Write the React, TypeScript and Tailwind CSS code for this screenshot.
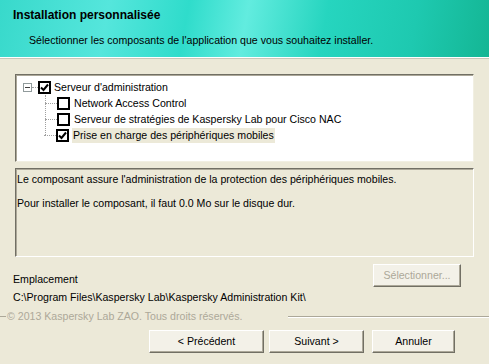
import React from "react";

const font = { fontFamily: '"Liberation Sans", Arial, sans-serif' };

function CheckBox({ checked }: { checked: boolean }) {
  return (
    <div className="w-[13px] h-[13px] border-2 border-black bg-white flex items-center justify-center shrink-0">
      {checked && (
        <svg width="9" height="9" viewBox="0 0 9 9">
          <path d="M1 4.5 L3.5 7 L8 1.5" stroke="black" strokeWidth="2" fill="none" />
        </svg>
      )}
    </div>
  );
}

function Child({ label, checked, selected }: { label: string; checked: boolean; selected?: boolean }) {
  return (
    <div className="flex items-center h-[16px]">
      <div className="w-[12px] h-px border-t border-dotted border-[#a0a0a0] ml-[7px]" />
      <CheckBox checked={checked} />
      <span className={"ml-[3px] px-[1px] leading-[15px] " + (selected ? "bg-[#ece9d8]" : "")}>{label}</span>
    </div>
  );
}

function Btn({ children, disabled, className }: { children: React.ReactNode; disabled?: boolean; className?: string }) {
  return (
    <div
      className={
        "h-[23px] flex items-center justify-center bg-[#f3f1e8] border border-t-white border-l-white border-r-[#716f64] border-b-[#716f64] shadow-[inset_-1px_-1px_0_#aca899] " +
        (disabled ? "text-[#aca899] " : "text-black ") +
        (className ?? "")
      }
    >
      {children}
    </div>
  );
}

export default function App() {
  return (
    <div className="w-[489px] h-[364px] bg-[#ece9d8] text-[10.6px] text-black overflow-hidden flex flex-col" style={font}>
      <div className="h-[57px] bg-[linear-gradient(100deg,#38d9cb_0%,#55e6dc_22%,#2fdccb_38%,#62ecdf_50%,#26d5bf_66%,#1ec9b0_84%,#14b694_100%)] pt-[8px] pl-[13px]">
        <div className="font-bold text-[12px] leading-[14px]">Installation personnalisée</div>
        <div className="pl-[16px] mt-[12px] leading-[13px]">Sélectionner les composants de l'application que vous souhaitez installer.</div>
      </div>
      <div className="h-px bg-white" />
      <div className="h-px bg-[#c9c6b8]" />

      {/* component tree */}
      <div className="mt-[15px] ml-[15px] w-[459px] h-[88px] bg-white border border-t-[#716f64] border-l-[#716f64] border-r-[#f1efe2] border-b-[#f1efe2] shadow-[inset_1px_1px_0_#aca899] pt-[4px] pl-[7px]">
        <div className="flex items-center h-[16px]">
          <div className="w-[9px] h-[9px] border border-[#919b9c] bg-white flex items-center justify-center">
            <div className="w-[5px] h-px bg-[#404040]" />
          </div>
          <div className="w-[6px] border-t border-dotted border-[#a0a0a0]" />
          <CheckBox checked />
          <span className="ml-[3px] leading-[15px]">Serveur d'administration</span>
        </div>
        <div className="ml-[22px] border-l border-dotted border-[#a0a0a0] h-[40px]">
          <div className="-ml-[8px]">
            <Child label="Network Access Control" checked={false} />
            <Child label="Serveur de stratégies de Kaspersky Lab pour Cisco NAC" checked={false} />
          </div>
        </div>
        <div className="ml-[14px] -mt-[8px]">
          <Child label="Prise en charge des périphériques mobiles" checked selected />
        </div>
      </div>

      {/* description */}
      <div className="mt-[6px] ml-[15px] w-[459px] h-[89px] border border-t-[#716f64] border-l-[#716f64] border-r-white border-b-white shadow-[inset_1px_1px_0_#aca899] pl-[1px] pt-[4px] leading-[13px]">
        <div>Le composant assure l'administration de la protection des périphériques mobiles.</div>
        <div className="mt-[11px]">Pour installer le composant, il faut 0.0 Mo sur le disque dur.</div>
      </div>

      <div className="flex justify-end pr-[28px] mt-[7px]">
        <Btn disabled className="w-[88px]">Sélectionner...</Btn>
      </div>
      <div className="pl-[13px] -mt-[14px] leading-[13px]">Emplacement</div>
      <div className="pl-[13px] mt-[5px] leading-[13px]">C:\Program Files\Kaspersky Lab\Kaspersky Administration Kit\</div>

      <div className="flex items-center mt-[6px] h-[13px]">
        <div className="w-[6px] h-px bg-[#aca899]" />
        <span className="text-[#aca899] px-[1px] leading-[13px]">© 2013 Kaspersky Lab ZAO. Tous droits réservés.</span>
        <div className="flex-1 flex flex-col ml-[45px]">
          <div className="h-px bg-[#aca899]" />
          <div className="h-px bg-white" />
        </div>
      </div>

      <div className="flex mt-[7px] pl-[149px] gap-[5px]">
        <Btn className="w-[115px]">&lt; Précédent</Btn>
        <Btn className="w-[95px]">Suivant &gt;</Btn>
        <Btn className="w-[83px] ml-[3px]">Annuler</Btn>
      </div>
    </div>
  );
}
